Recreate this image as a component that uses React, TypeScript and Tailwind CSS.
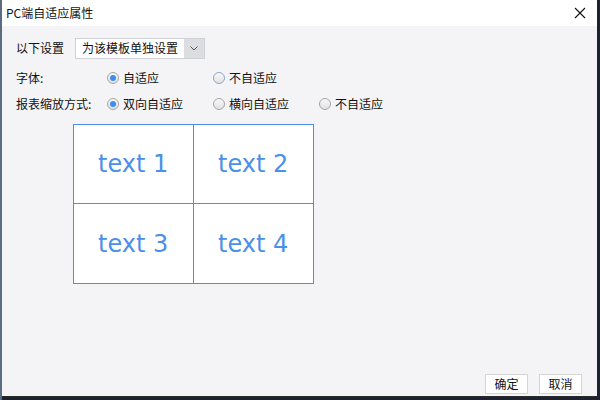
import React from "react";

const cjk = { fontFamily: '"Noto Sans CJK SC", "Liberation Sans", sans-serif' };

function Radio({ checked, label, hover }: { checked?: boolean; label: string; hover?: boolean }) {
  return (
    <label className="flex items-center gap-[4px] text-[12px] text-[#111]">
      <span
        className={
          "w-[12px] h-[12px] rounded-full border flex items-center justify-center bg-gradient-to-b from-[#f8f8f8] to-[#e2e2e2] " +
          (hover ? "border-[#8aa6cc]" : "border-[#a5a5a5]")
        }
      >
        {checked && <span className="w-[6px] h-[6px] rounded-full bg-[#3d8ef0]" />}
      </span>
      <span>{label}</span>
    </label>
  );
}

export default function App() {
  const cells = ["text 1", "text 2", "text 3", "text 4"];
  return (
    <div className="w-[600px] h-[400px] bg-[#1c2230] flex" style={cjk}>
      <div className="w-[2px] h-full bg-[#5b6b82]" />
      <div className="w-[595px] h-[397px] flex flex-col bg-[#f4f4f7] border-b border-[#2a2a2a]">
        <div className="h-[26px] bg-white flex items-center justify-between pl-[4px] pr-[10px] shrink-0">
          <span className="text-[12px] text-[#111]">PC端自适应属性</span>
          <svg width="12" height="12" viewBox="0 0 12 12" className="mr-[1px]">
            <path d="M1 1 L11 11 M11 1 L1 11" stroke="#111" strokeWidth="1.1" />
          </svg>
        </div>
        <div className="flex-1 flex flex-col pl-[14px] pt-[11px]">
          <div className="flex items-center h-[22px] text-[12px] text-[#111]">
            <span className="w-[59px]">以下设置</span>
            <div className="flex h-[21px] border border-[#cfd1d6] bg-white">
              <span className="px-[6px] flex items-center">为该模板单独设置</span>
              <span className="w-[20px] bg-[#dcdde1] flex items-center justify-center">
                <svg width="8" height="5" viewBox="0 0 8 5">
                  <path d="M0.5 0.5 L4 4 L7.5 0.5" stroke="#555" fill="none" strokeWidth="1" />
                </svg>
              </span>
            </div>
          </div>
          <div className="flex items-center h-[22px] mt-[8px] text-[12px] text-[#111]">
            <span className="w-[91px]">字体:</span>
            <div className="w-[106px]"><Radio checked label="自适应" /></div>
            <Radio hover label="不自适应" />
          </div>
          <div className="flex items-center h-[22px] mt-[4px] text-[12px] text-[#111]">
            <span className="w-[91px]">报表缩放方式:</span>
            <div className="w-[106px]"><Radio checked label="双向自适应" /></div>
            <div className="w-[106px]"><Radio label="横向自适应" /></div>
            <Radio label="不自适应" />
          </div>
          <div className="ml-[57px] mt-[9px] w-[241px] grid grid-cols-2 border border-[#4a90e8] bg-white">
            {cells.map((c, i) => (
              <div
                key={c}
                className={
                  "h-[79px] flex items-center justify-center text-[24px] text-[#4a8fe8] " +
                  (i % 2 === 0 ? "border-r border-[#4a90e8] " : "") +
                  (i < 2 ? "border-b border-[#4a90e8]" : "")
                }
                style={{ fontFamily: '"DejaVu Sans", Verdana, sans-serif' }}
              >
                {c}
              </div>
            ))}
          </div>
          <div className="flex-1" />
          <div className="flex justify-end gap-[11px] pr-[15px] pb-[2px]">
            <button className="w-[43px] h-[20px] bg-white border border-[#d4d4d4] text-[12px] text-[#111] flex items-center justify-center">确定</button>
            <button className="w-[43px] h-[20px] bg-white border border-[#d4d4d4] text-[12px] text-[#111] flex items-center justify-center">取消</button>
          </div>
        </div>
      </div>
      <div className="flex-1 bg-[#1c2230]" />
    </div>
  );
}
